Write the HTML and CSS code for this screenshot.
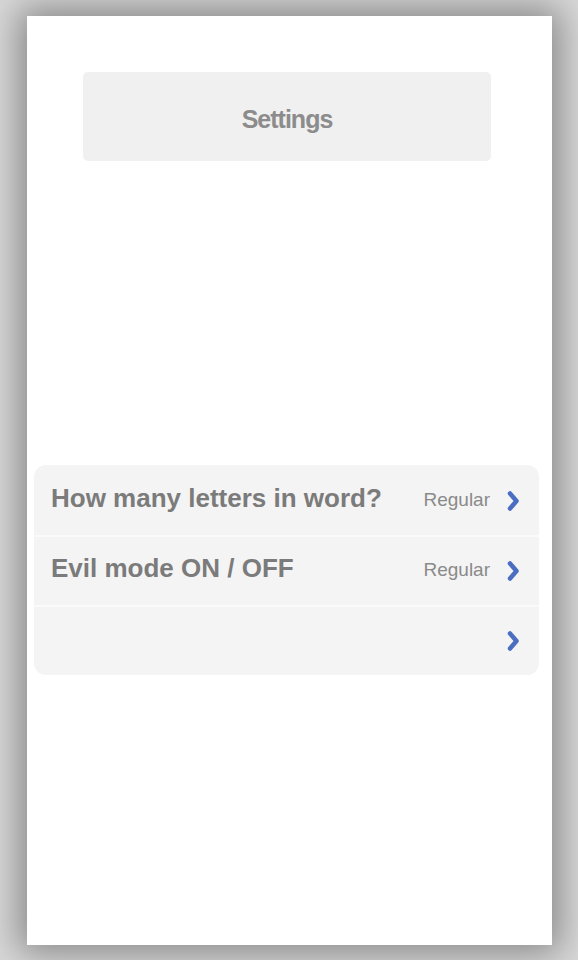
FILE: index.html
```html
<!DOCTYPE html>
<html>
<head>
<meta charset="utf-8">
<link rel="stylesheet" href="styles.css">
</head>
<body>
<div class="screen">
  <div class="title-box"><span class="title">Settings</span></div>
  <div class="list">
    <div class="row">
      <span class="label">How many letters in word?</span>
      <span class="value">Regular</span>
      <svg class="chev" viewBox="0 0 12 20" width="12" height="20"><path d="M3 2.5 L9.5 10 L3 17.5" fill="none" stroke="#4b6ec2" stroke-width="4.5" stroke-linecap="round" stroke-linejoin="round"/></svg>
    </div>
    <div class="row">
      <span class="label">Evil mode ON / OFF</span>
      <span class="value">Regular</span>
      <svg class="chev" viewBox="0 0 12 20" width="12" height="20"><path d="M3 2.5 L9.5 10 L3 17.5" fill="none" stroke="#4b6ec2" stroke-width="4.5" stroke-linecap="round" stroke-linejoin="round"/></svg>
    </div>
    <div class="row">
      <span class="label"></span>
      <span class="value"></span>
      <svg class="chev" viewBox="0 0 12 20" width="12" height="20"><path d="M3 2.5 L9.5 10 L3 17.5" fill="none" stroke="#4b6ec2" stroke-width="4.5" stroke-linecap="round" stroke-linejoin="round"/></svg>
    </div>
  </div>
</div>
</body>
</html>
```
FILE: styles.css
```css
html, body {
  margin: 0;
  padding: 0;
}
body {
  background: #d9d9d9;
  width: 578px;
  height: 960px;
  overflow: hidden;
  padding-top: 16px;
  box-sizing: border-box;
  font-family: "Liberation Sans", Arial, sans-serif;
}
.screen {
  margin-left: 27px;
  width: 525px;
  height: 929px;
  background: #ffffff;
  box-shadow: 0 0 34px 8px rgba(0, 0, 0, 0.38);
  padding-top: 56px;
  box-sizing: border-box;
}
.title-box {
  margin-left: 56px;
  width: 408px;
  height: 89px;
  background: #f0f0f0;
  border-radius: 5px;
  display: flex;
  align-items: center;
  justify-content: center;
}
.title {
  font-size: 25px;
  font-weight: bold;
  letter-spacing: -1px;
  color: #8c8c8c;
  padding-top: 6px;
}
.list {
  margin-top: 304px;
  margin-left: 7px;
  width: 505px;
  background: #f4f4f4;
  border-radius: 12px;
  display: flex;
  flex-direction: column;
}
.row {
  height: 70px;
  display: flex;
  align-items: center;
  padding: 0 20px 0 17px;
  box-sizing: border-box;
  border-top: 2px solid #fafafa;
}
.row:first-child {
  border-top: none;
  padding-top: 2px;
}
.label {
  flex: 1;
  font-size: 26px;
  font-weight: bold;
  color: #7b7b7b;
  margin-bottom: 5px;
}
.value {
  font-size: 19px;
  color: #8a8a8a;
  margin-right: 17px;
  margin-bottom: 2px;
}
.chev {
  display: block;
}
```
